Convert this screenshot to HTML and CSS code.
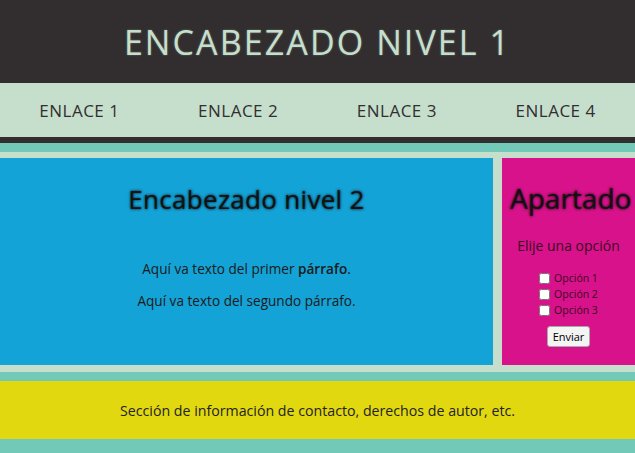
FILE: index.html
```html
<!DOCTYPE html>
<html lang="es">
<head>
<meta charset="utf-8">
<title>Maqueta</title>
<link rel="stylesheet" href="styles.css">
</head>
<body>
<header class="site-header">
  <h1 class="title">ENCABEZADO NIVEL 1</h1>
</header>
<nav class="menu">
  <a href="#" class="menu-link">ENLACE 1</a>
  <a href="#" class="menu-link">ENLACE 2</a>
  <a href="#" class="menu-link">ENLACE 3</a>
  <a href="#" class="menu-link">ENLACE 4</a>
</nav>
<div class="content">
  <section class="main">
    <h2 class="main-title">Encabezado nivel 2</h2>
    <p class="para">Aquí va texto del primer <strong>párrafo</strong>.</p>
    <p class="para">Aquí va texto del segundo párrafo.</p>
  </section>
  <aside class="side">
    <h2 class="side-title">Apartado</h2>
    <p class="side-text">Elije una opción</p>
    <form class="side-form">
      <label class="opt"><input type="checkbox"> Opción 1</label>
      <label class="opt"><input type="checkbox"> Opción 2</label>
      <label class="opt"><input type="checkbox"> Opción 3</label>
      <button type="button" class="send">Enviar</button>
    </form>
  </aside>
</div>
<footer class="foot">
  <p class="foot-text">Sección de información de contacto, derechos de autor, etc.</p>
</footer>
</body>
</html>
```
FILE: styles.css
```css
html, body {
  margin: 0;
  padding: 0;
  overflow: hidden;
}
body {
  background: #73c9b7;
  font-family: "Open Sans", "DejaVu Sans", sans-serif;
  color: #222;
  width: 635px;
  height: 453px;
}
.site-header {
  background: #322e2f;
  height: 83px;
  display: flex;
  align-items: center;
  justify-content: center;
}
.title {
  margin: 0;
  font-weight: 400;
  font-size: 34px;
  letter-spacing: 2.1px;
  color: #c6dfcd;
  text-shadow: 0 0 2px #6f7d74;
}
.menu {
  background: #c6dfcd;
  height: 54px;
  display: flex;
  align-items: center;
  border-bottom: 6px solid #322e2f;
  margin-bottom: 9px;
}
.menu-link {
  flex: 1;
  text-align: center;
  text-decoration: none;
  color: #322e2f;
  font-size: 17px;
  letter-spacing: 0.5px;
}
.content {
  background: #c6dfcd;
  padding: 6px 0 7px 0;
  display: flex;
  gap: 9px;
  margin-bottom: 9px;
}
.main {
  background: #14a3d7;
  width: 493px;
  flex-shrink: 0;
  height: 207px;
  text-align: center;
  box-sizing: border-box;
  padding-top: 23px;
}
.main-title {
  margin: 0 0 42px;
  font-size: 26px;
  font-weight: 500;
  letter-spacing: 0.3px;
  color: #111;
  text-shadow: 0 0 3px #000;
}
.para {
  margin: 0 0 13px;
  font-size: 13.6px;
  color: #1a1a1a;
}
.para strong {
  font-weight: 600;
}
.side {
  background: #d8128a;
  flex: 1;
  min-width: 0;
  height: 207px;
  box-sizing: border-box;
  padding: 21px 8px 0;
  text-align: center;
}
.side-title {
  margin: 0 0 19px;
  font-size: 28px;
  font-weight: 400;
  color: #111;
  white-space: nowrap;
  text-align: left;
  text-shadow: 0 0 3px #000;
}
.side-text {
  margin: 0 0 15px;
  font-size: 14px;
  color: #3a0a24;
  white-space: nowrap;
}
.side-form {
  display: flex;
  flex-direction: column;
  align-items: center;
}
.opt {
  font-size: 10.5px;
  color: #3a0a24;
  display: flex;
  align-items: center;
  gap: 4px;
  height: 16px;
}
.opt input {
  margin: 0;
  width: 11px;
  height: 11px;
}
.send {
  margin-top: 8px;
  font-family: "Open Sans", sans-serif;
  font-size: 11px;
  padding: 2px 5px;
  background: #f4f4f4;
  border: 1px solid #aaa;
  border-radius: 3px;
}
.foot {
  background: #e2d80f;
  height: 58px;
  display: flex;
  align-items: center;
  justify-content: center;
}
.foot-text {
  margin: 0;
  font-size: 14.2px;
  color: #222;
}
```
